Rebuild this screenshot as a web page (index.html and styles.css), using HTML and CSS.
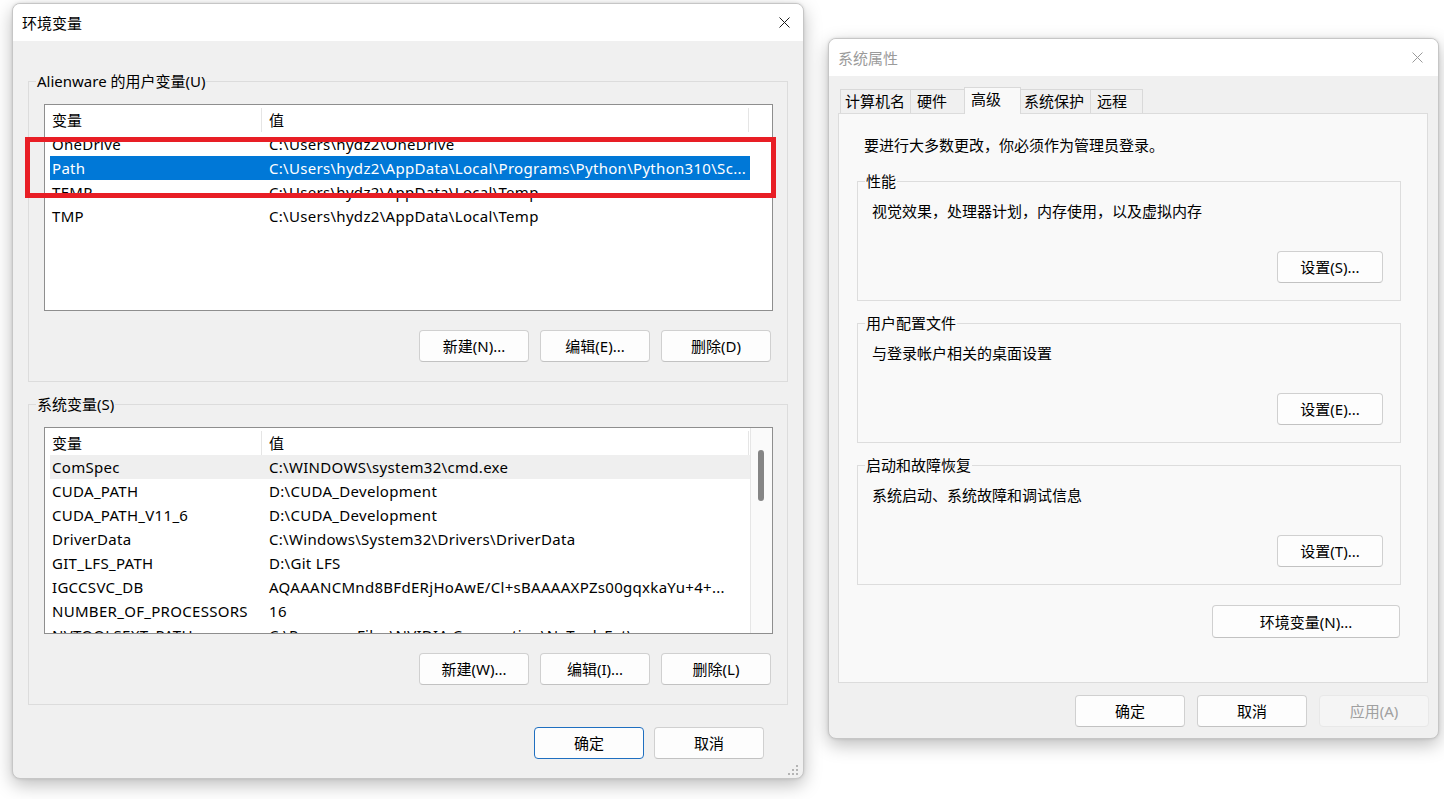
FILE: index.html
```html
<!DOCTYPE html>
<html lang="zh-CN">
<head>
<meta charset="utf-8">
<title>环境变量</title>
<link rel="stylesheet" href="styles.css">
</head>
<body>
<div class="desk">
  <section class="win env">
    <header class="titlebar">
      <span class="title">环境变量</span>
      <svg class="close" width="11" height="11" viewBox="0 0 11 11"><path d="M0.5 0.5 L10.5 10.5 M10.5 0.5 L0.5 10.5" stroke="#1a1a1a" stroke-width="1" fill="none"/></svg>
    </header>
    <div class="win-body">
      <fieldset class="group">
        <legend>Alienware 的用户变量(U)</legend>
        <div class="listbox">
          <div class="list-main">
            <div class="lv-head"><span class="c1">变量</span><span class="c2">值</span></div>
            <div class="lv-row"><span class="c1">OneDrive</span><span class="c2">C:\Users\hydz2\OneDrive</span></div>
            <div class="lv-row selected"><span class="c1">Path</span><span class="c2">C:\Users\hydz2\AppData\Local\Programs\Python\Python310\Sc...</span></div>
            <div class="lv-row"><span class="c1">TEMP</span><span class="c2">C:\Users\hydz2\AppData\Local\Temp</span></div>
            <div class="lv-row"><span class="c1">TMP</span><span class="c2">C:\Users\hydz2\AppData\Local\Temp</span></div>
          </div>
        </div>
        <div class="btn-row">
          <button class="btn">新建(N)...</button>
          <button class="btn">编辑(E)...</button>
          <button class="btn">删除(D)</button>
        </div>
      </fieldset>
      <fieldset class="group second">
        <legend>系统变量(S)</legend>
        <div class="listbox">
          <div class="list-main">
            <div class="lv-head"><span class="c1">变量</span><span class="c2">值</span></div>
            <div class="lv-row hover"><span class="c1">ComSpec</span><span class="c2">C:\WINDOWS\system32\cmd.exe</span></div>
            <div class="lv-row"><span class="c1">CUDA_PATH</span><span class="c2">D:\CUDA_Development</span></div>
            <div class="lv-row"><span class="c1">CUDA_PATH_V11_6</span><span class="c2">D:\CUDA_Development</span></div>
            <div class="lv-row"><span class="c1">DriverData</span><span class="c2">C:\Windows\System32\Drivers\DriverData</span></div>
            <div class="lv-row"><span class="c1">GIT_LFS_PATH</span><span class="c2">D:\Git LFS</span></div>
            <div class="lv-row"><span class="c1">IGCCSVC_DB</span><span class="c2">AQAAANCMnd8BFdERjHoAwE/Cl+sBAAAAXPZs00gqxkaYu+4+...</span></div>
            <div class="lv-row"><span class="c1">NUMBER_OF_PROCESSORS</span><span class="c2">16</span></div>
            <div class="lv-row"><span class="c1">NVTOOLSEXT_PATH</span><span class="c2">C:\Program Files\NVIDIA Corporation\NvToolsExt\</span></div>
          </div>
          <div class="vscroll"><div class="thumb"></div></div>
        </div>
        <div class="btn-row">
          <button class="btn">新建(W)...</button>
          <button class="btn">编辑(I)...</button>
          <button class="btn">删除(L)</button>
        </div>
      </fieldset>
      <div class="footer">
        <button class="btn default">确定</button>
        <button class="btn">取消</button>
      </div>
    </div>
    <div class="mark"></div>
    <svg class="grip" width="11" height="11" viewBox="0 0 11 11">
      <rect x="8" y="0" width="2" height="2" fill="#b4b4b4"/>
      <rect x="4" y="4" width="2" height="2" fill="#b4b4b4"/>
      <rect x="8" y="4" width="2" height="2" fill="#b4b4b4"/>
      <rect x="0" y="8" width="2" height="2" fill="#b4b4b4"/>
      <rect x="4" y="8" width="2" height="2" fill="#b4b4b4"/>
      <rect x="8" y="8" width="2" height="2" fill="#b4b4b4"/>
    </svg>
  </section>

  <section class="win sysprop">
    <header class="titlebar">
      <span class="title inactive">系统属性</span>
      <svg class="close" width="11" height="11" viewBox="0 0 11 11"><path d="M0.5 0.5 L10.5 10.5 M10.5 0.5 L0.5 10.5" stroke="#9a9a9a" stroke-width="1" fill="none"/></svg>
    </header>
    <div class="sp-body">
      <div class="tabs">
        <span class="tab t-wide">计算机名</span>
        <span class="tab t-hw">硬件</span>
        <span class="tab t-sel">高级</span>
        <span class="tab t-wide2">系统保护</span>
        <span class="tab t-rem">远程</span>
      </div>
      <div class="panel">
        <p class="intro">要进行大多数更改，你必须作为管理员登录。</p>
        <fieldset class="sgroup">
          <legend>性能</legend>
          <p class="desc">视觉效果，处理器计划，内存使用，以及虚拟内存</p>
          <div class="sbtn-row"><button class="btn set">设置(S)...</button></div>
        </fieldset>
        <fieldset class="sgroup next">
          <legend>用户配置文件</legend>
          <p class="desc">与登录帐户相关的桌面设置</p>
          <div class="sbtn-row"><button class="btn set">设置(E)...</button></div>
        </fieldset>
        <fieldset class="sgroup next">
          <legend>启动和故障恢复</legend>
          <p class="desc">系统启动、系统故障和调试信息</p>
          <div class="sbtn-row"><button class="btn set">设置(T)...</button></div>
        </fieldset>
        <div class="env-row"><button class="btn envbtn">环境变量(N)...</button></div>
      </div>
      <div class="sp-footer">
        <button class="btn">确定</button>
        <button class="btn">取消</button>
        <button class="btn disabled">应用(A)</button>
      </div>
    </div>
  </section>
</div>
</body>
</html>
```

FILE: styles.css
```css
* { box-sizing: border-box; }

html, body {
  margin: 0;
  background: #ffffff;
}

body {
  font-family: "Noto Sans", "Noto Sans CJK SC", sans-serif;
  font-size: 15px;
  color: #000;
  overflow: hidden;
}

.desk {
  display: flex;
  align-items: flex-start;
  gap: 24px;
  padding: 3px 0 0 12px;
  height: 799px;
  overflow: hidden;
}

.win {
  position: relative;
  flex: none;
  background: #f0f0f0;
  border: 1px solid #c6c6c6;
  border-radius: 8px;
  box-shadow: 0 6px 18px rgba(0, 0, 0, 0.26), 0 0 3px rgba(0, 0, 0, 0.12);
}

.env { width: 792px; height: 776px; }
.sysprop { width: 611px; height: 701px; margin-top: 35px; }

.titlebar {
  height: 37px;
  background: #fff;
  border-radius: 7px 7px 0 0;
  display: flex;
  align-items: center;
  justify-content: space-between;
  padding: 0 13px 0 9px;
}

.sysprop .titlebar { padding-right: 15px; }

.title { line-height: 20px; font-size: 15px; }
.title.inactive { color: #9b9b9b; }

.close { display: block; }

/* ---------- environment window ---------- */
.win-body { padding: 30px 15px 0; }

.group {
  margin: 0;
  border: 1px solid #dcdcdc;
  padding: 13px 14px 19px 15px;
  min-width: 0;
}

.group.second { margin-top: 12px; }

.group legend,
.sgroup legend {
  padding: 0 1px;
  margin-left: -8px;
  line-height: 20px;
  font-size: 15px;
}

.listbox {
  height: 207px;
  border: 1px solid #8e8e8e;
  background: #fff;
  display: flex;
  overflow: hidden;
}

.list-main {
  flex: 0 0 705px;
  padding-left: 5px;
}

.lv-head,
.lv-row {
  display: flex;
  align-items: center;
  white-space: nowrap;
}

.lv-head { height: 27px; padding-top: 2px; }
.lv-row { height: 24px; letter-spacing: 0.3px; }

.c1 {
  flex: 0 0 212px;
  padding-left: 2px;
  overflow: hidden;
}

.c2 {
  flex: 0 0 487px;
  padding-left: 7px;
  overflow: hidden;
  text-overflow: ellipsis;
}

.lv-head .c1,
.lv-head .c2 {
  position: relative;
  align-self: stretch;
  display: flex;
  align-items: center;
}

.lv-head .c1::after,
.lv-head .c2::after {
  content: "";
  position: absolute;
  right: 0;
  top: 1px;
  bottom: 0;
  width: 1px;
  background: #e5e5e5;
}

.lv-row.selected { background: #0078d7; color: #fff; }
.lv-row.hover { background: #efefef; }

.vscroll {
  flex: 1;
  border-left: 1px solid #e6e6e6;
  background: #fafafa;
  padding: 22px 0 0 7px;
}

.thumb {
  width: 6px;
  height: 51px;
  border-radius: 3px;
  background: #858585;
}

.btn-row {
  display: flex;
  justify-content: flex-end;
  gap: 11px;
  margin-top: 19px;
  padding-right: 2px;
}

.btn {
  width: 110px;
  height: 32px;
  padding: 0;
  border: 1px solid #d0d0d0;
  border-bottom-color: #c2c2c2;
  border-radius: 4px;
  background: #fdfdfd;
  font-family: "Noto Sans", "Noto Sans CJK SC", sans-serif;
  font-size: 15px;
  line-height: 20px;
  color: #000;
}

.btn.default { border-color: #1f6fc0; }

.btn.disabled {
  background: #f5f5f5;
  border-color: #e8e8e8;
  color: #a0a0a0;
}

.footer {
  display: flex;
  justify-content: flex-end;
  gap: 10px;
  margin-top: 22px;
  padding-right: 24px;
}

.mark {
  position: absolute;
  left: 12px;
  top: 133px;
  width: 751px;
  height: 61px;
  border: 5px solid #e81e25;
}

.grip {
  position: absolute;
  right: 4px;
  bottom: 2px;
}

/* ---------- system properties ---------- */
.sp-body { padding: 11px 10px 0 9px; }

.tabs {
  display: flex;
  align-items: flex-end;
  height: 26px;
  padding-left: 2px;
}

.tab {
  position: relative;
  height: 24px;
  line-height: 22px;
  border: 1px solid #d9d9d9;
  border-bottom: none;
  background: #f0f0f0;
  padding-left: 6px;
  margin-left: -1px;
  white-space: nowrap;
}

.t-wide { width: 71px; padding-left: 4px; margin-left: 0; }
.t-hw { width: 55px; }
.t-sel {
  width: 57px;
  height: 27px;
  line-height: 23px;
  background: #f9f9f9;
  z-index: 1;
  margin-bottom: -1px;
}
.t-wide2 { width: 71px; padding-left: 3px; }
.t-rem { width: 53px; }

.panel {
  height: 570px;
  border: 1px solid #dcdcdc;
  background: #f9f9f9;
  padding: 21px 26px 0 18px;
}

.intro {
  margin: 0 0 16px 7px;
  line-height: 20px;
}

.sgroup {
  margin: 0;
  border: 1px solid #dddddd;
  padding: 10px 17px 17px 14px;
  min-width: 0;
}

.sgroup legend { margin-left: -7px; }
.sgroup.next { margin-top: 12px; }

.desc {
  margin: 0;
  line-height: 20px;
}

.sbtn-row {
  display: flex;
  justify-content: flex-end;
  margin-top: 30px;
}

.btn.set { width: 106px; }

.env-row {
  display: flex;
  justify-content: flex-end;
  margin-top: 20px;
  padding-right: 1px;
}

.btn.envbtn { width: 188px; height: 33px; }

.sp-footer {
  display: flex;
  justify-content: flex-end;
  gap: 12px;
  margin-top: 12px;
  margin-right: -1px;
}
```
